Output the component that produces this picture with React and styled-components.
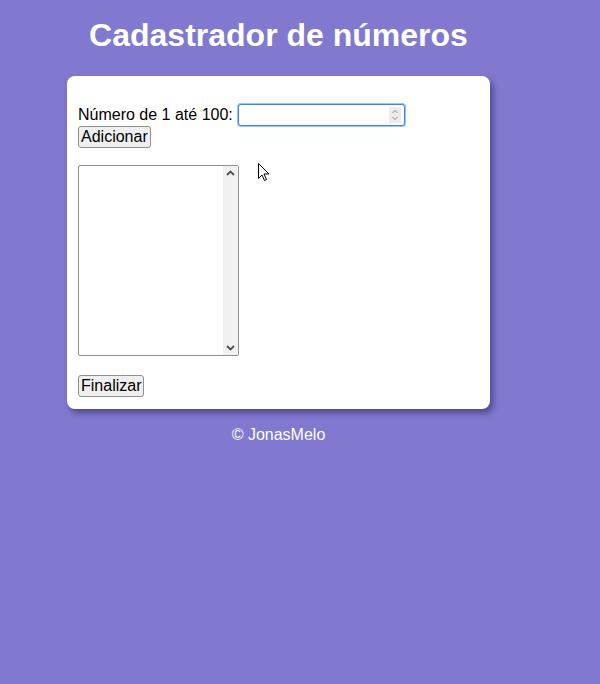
import React from 'react';
import styled, { createGlobalStyle } from 'styled-components';

const GlobalStyle = createGlobalStyle`
  body {
    margin: 0;
    background: #8079cf;
    font-family: "Liberation Sans", Arial, sans-serif;
    font-size: 16px;
  }
`;

const Main = styled.main`
  width: 423px;
  margin-left: 67px;
  padding-top: 17px;
`;

const Title = styled.h1`
  margin: 0 0 22px 0;
  font-size: 32px;
  line-height: 37px;
  text-align: center;
  color: #ffffff;
`;

const Card = styled.section`
  position: relative;
  background: #ffffff;
  border-radius: 8px;
  padding: 28px 11px 12px 11px;
  box-shadow: 3px 4px 6px rgba(40, 30, 90, 0.55);
`;

const Line = styled.div`
  display: flex;
  align-items: center;
  gap: 5px;
  color: #000;
`;

// focused number field, with the little spin box at its right
const InputFrame = styled.div`
  display: flex;
  align-items: center;
  width: 167px;
  height: 22px;
  box-sizing: border-box;
  border: 1px solid #3b82f6;
  border-radius: 3px;
  box-shadow: 0 0 0 1px #9cc2fb;
  padding: 0 3px 0 2px;
  background: #fff;
`;

const NumberInput = styled.input`
  flex: 1;
  min-width: 0;
  border: none;
  outline: none;
  font-size: 13px;
  font-family: "Liberation Sans", Arial, sans-serif;
  padding: 0;
  -moz-appearance: textfield;
  &::-webkit-inner-spin-button,
  &::-webkit-outer-spin-button {
    -webkit-appearance: none;
    margin: 0;
  }
`;

const Spin = styled.svg`
  flex: none;
  background: #ececec;
`;

const Button = styled.button`
  display: block;
  font-family: "Liberation Sans", Arial, sans-serif;
  font-size: 16px;
  color: #000;
  background: #efefef;
  border: 1px solid #8f8f8f;
  border-radius: 3px;
  padding: 0 2px;
  height: 22px;
  line-height: 18px;
  margin-top: ${({ $top }) => $top || 0}px;
`;

const ListFrame = styled.div`
  display: flex;
  margin-top: 17px;
  width: 161px;
  height: 191px;
  box-sizing: border-box;
  border: 1px solid #8f8f8f;
  border-radius: 2px;
  background: #fff;
  overflow: hidden;
`;

const ListBox = styled.select`
  flex: 1;
  border: none;
  outline: none;
  background: transparent;
  overflow: hidden;
`;

const ScrollTrack = styled.div`
  width: 15px;
  display: flex;
  flex-direction: column;
  justify-content: space-between;
  align-items: center;
  background: #f1f1f1;
  padding: 4px 0;
`;

const Pointer = styled.svg`
  position: absolute;
  left: 191px;
  top: 87px;
`;

const Footer = styled.footer`
  margin-top: 17px;
  text-align: center;
  color: #ffffff;
  font-size: 16px;
`;

const Chevron = ({ up }) => (
  <svg width="9" height="6" viewBox="0 0 9 6">
    <path
      d={up ? 'M1 5 L4.5 1.5 L8 5' : 'M1 1 L4.5 4.5 L8 1'}
      fill="none"
      stroke="#505050"
      strokeWidth="1.8"
    />
  </svg>
);

export default function App() {
  return (
    <>
      <GlobalStyle />
      <Main>
        <Title>Cadastrador de números</Title>
        <Card>
          <Line>
            <label htmlFor="num">Número de 1 até 100:</label>
            <InputFrame>
              <NumberInput type="number" id="num" />
              <Spin width="12" height="16" viewBox="0 0 12 16">
                <path d="M3.5 6 L6 3.5 L8.5 6 M3.5 10 L6 12.5 L8.5 10" fill="none" stroke="#8a8a8a" strokeWidth="1" />
              </Spin>
            </InputFrame>
          </Line>
          <Button type="button">Adicionar</Button>
          <ListFrame>
            <ListBox size={10} multiple />
            <ScrollTrack>
              <Chevron up />
              <Chevron />
            </ScrollTrack>
          </ListFrame>
          <Button type="button" $top={19}>Finalizar</Button>
          <Pointer width="12" height="19" viewBox="0 0 12 19">
            <path d="M0.5 0.5 L0.5 15.5 L4 12 L6.5 17.5 L8.5 16.5 L6 11 L11 11 Z" fill="#fff" stroke="#000" strokeWidth="1" />
          </Pointer>
        </Card>
        <Footer>© JonasMelo</Footer>
      </Main>
    </>
  );
}
